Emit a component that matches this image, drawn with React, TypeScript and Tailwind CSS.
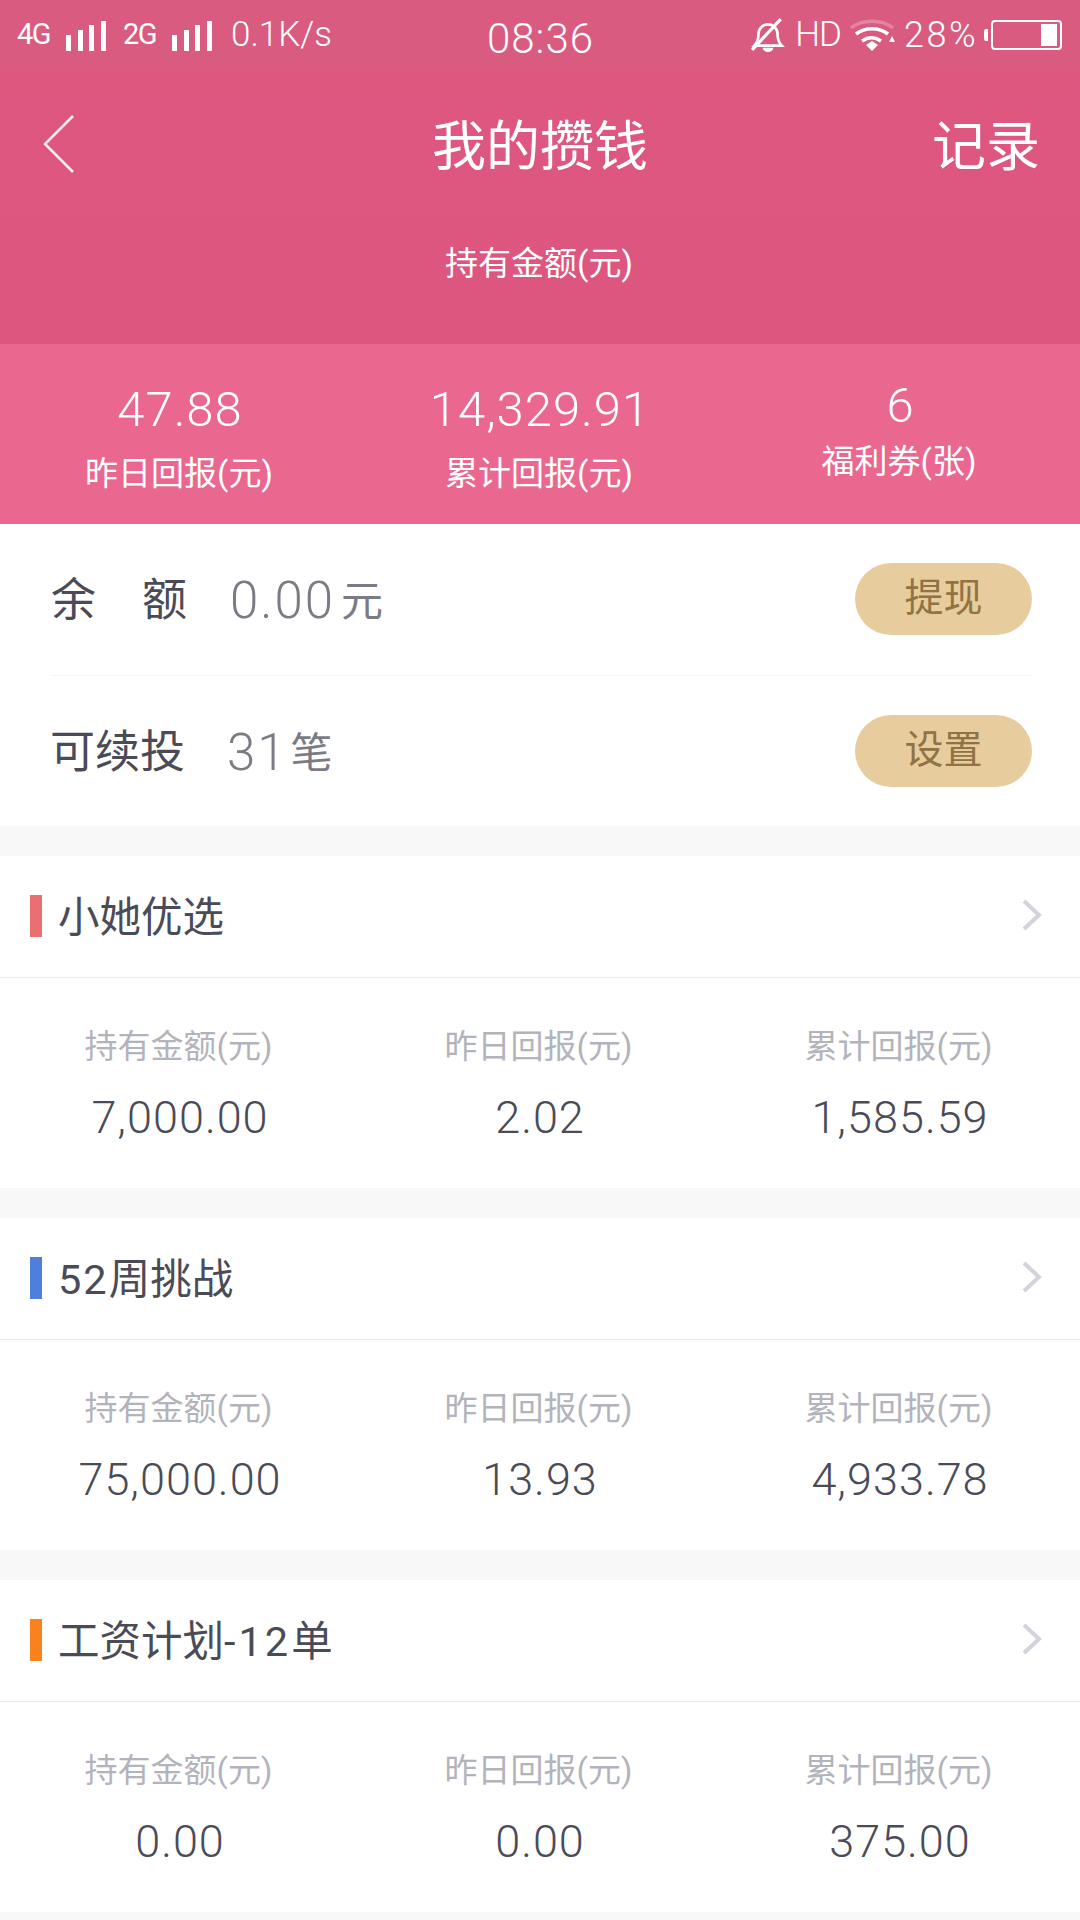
const font = '[font-family:Roboto,"Noto_Sans_CJK_SC",sans-serif]'

function Bars() {
    return (
        <svg width="42" height="30" viewBox="0 0 42 30" fill="white">
            <rect x="0" y="14" width="5" height="16" />
            <rect x="12" y="9" width="5" height="21" />
            <rect x="23" y="4" width="5" height="26" />
            <rect x="35" y="0" width="5" height="30" />
        </svg>
    )
}

function StatusBar() {
    return (
        <div className="h-[70px] bg-[#d95b80] flex items-center justify-between text-white relative pl-[17px] pr-[18px]">
            <div className="flex items-center">
                <span className="text-[29px] w-[36px] tracking-[-1.5px]">4G</span>
                <span className="ml-[13px] mt-[2px]"><Bars /></span>
                <span className="text-[29px] ml-[15px] w-[36px] tracking-[-1.5px]">2G</span>
                <span className="ml-[13px] mt-[2px]"><Bars /></span>
                <span className="text-[35px] ml-[17px] font-light">0.1K/s</span>
            </div>
            <div className="absolute left-[487px] top-[15px] text-[42px] leading-[48px] font-light tracking-[1px]">08:36</div>
            <div className="flex items-center">
                <svg width="36" height="36" viewBox="0 0 34 34" fill="none" stroke="white" strokeWidth="2.5">
                    <path d="M4 27c3-3 4-6 4-11 0-5 4-9 9-9s9 4 9 9c0 5 1 8 4 11z" />
                    <path d="M2 31L29 2" strokeWidth="3" />
                    <path d="M12 29a5 4 0 0 0 10 0z" fill="white" stroke="none" />
                </svg>
                <span className="text-[35px] ml-[9px] font-light tracking-[-1px]">HD</span>
                <svg className="ml-[8px]" width="46" height="34" viewBox="0 0 46 34" fill="none" stroke="white" strokeWidth="3.5">
                    <path d="M2 10c11-9 31-9 42 0" strokeOpacity="0.25" />
                    <path d="M7 16c9-7 23-7 32 0" />
                    <path d="M13 23c6-4 13-4 19 0" />
                    <path d="M17 27l6-4 6 4-6 6z" fill="white" stroke="none" />
                    <path d="M40 24l3-6 3 6z" fill="white" stroke="none" />
                </svg>
                <span className="text-[36px] ml-[9px] tracking-[2.5px] font-light">28%</span>
                <span className="ml-[6px] w-[4px] h-[12px] bg-white rounded-l-[2px]" />
                <span className="ml-[3px] w-[71px] h-[30px] border-2 border-white rounded-[4px] flex justify-end items-center pr-[3px]">
                    <span className="w-[16px] h-[22px] bg-white" />
                </span>
            </div>
        </div>
    )
}

function TopStat({ value, label, small }: { value: string; label: string; small?: boolean }) {
    return (
        <div className="flex-1 flex flex-col items-center">
            <div className={small ? "text-[49px] leading-[56px] font-light -mt-[2px]" : "text-[49px] leading-[56px] font-light tracking-[1px] mt-[2px]"}>{value}</div>
            <div className={small ? "text-[33px] leading-[44px] mt-[6px] pr-[2px]" : "text-[33px] leading-[44px] mt-[14px] pr-[2px]"}>{label}</div>
        </div>
    )
}

function Row({ label, value, unit, unitGap, btn, gap }: { label: React.ReactNode; value: string; unit: string; unitGap: string; btn: string; gap: string }) {
    return (
        <div className="flex items-center h-[151px]">
            <div className="text-[45px] text-[#4b4b57] mt-[3px]">{label}</div>
            <div className={`flex items-center mt-[4px] ${gap}`}>
                <span className="text-[51px] text-[#7b7b86] font-light tracking-[2px]">{value}</span>
                <span className={`text-[42px] text-[#7b7b86] ${unitGap}`}>{unit}</span>
            </div>
            <div className="ml-auto mb-[2px] w-[177px] h-[72px] rounded-full bg-[#e7cc9d] flex items-center justify-center text-[39px] text-[#8f7343]">{btn}</div>
        </div>
    )
}

function Cell({ label, value }: { label: string; value: string }) {
    return (
        <div className="flex-1 flex flex-col items-center">
            <div className="text-[33px] leading-[44px] text-[#b3b3bc] pr-[3px]">{label}</div>
            <div className="text-[45px] leading-[52px] text-[#4b4b57] mt-[23px] font-light tracking-[1px]">{value}</div>
        </div>
    )
}

function Product({ color, name, values }: { color: string; name: React.ReactNode; values: string[] }) {
    return (
        <div className="bg-white">
            <div className="h-[122px] flex items-center pl-[30px] pr-[38px] border-b border-[#e9e9ee]">
                <span className={`w-[12px] h-[42px] -mt-[2px] ${color}`} />
                <span className="text-[41.5px] text-[#4b4b57] ml-[16px] mt-[3px]">{name}</span>
                <svg className="ml-auto -mt-[4px]" width="20" height="32" viewBox="0 0 20 32" fill="none" stroke="#d3d3dc" strokeWidth="4">
                    <path d="M2 2l15 14L2 30" />
                </svg>
            </div>
            <div className="h-[210px] pt-[47px] flex">
                <Cell label="持有金额(元)" value={values[0]} />
                <Cell label="昨日回报(元)" value={values[1]} />
                <Cell label="累计回报(元)" value={values[2]} />
            </div>
        </div>
    )
}

export default function App() {
    return (
        <div className={`w-[1080px] h-[1920px] overflow-hidden bg-[#f8f8f8] ${font}`}>
            <StatusBar />
            <div className="h-[274px] bg-gradient-to-b from-[#de577f] to-[#dc5680] text-white pt-[36px]">
                <div className="h-[76px] flex items-center justify-between pl-[42px] pr-[40px] relative">
                    <svg width="34" height="60" viewBox="0 0 34 60" fill="none" stroke="white" strokeWidth="2.5" strokeOpacity="0.9">
                        <path d="M31 2L3 30l28 28" />
                    </svg>
                    <div className="absolute left-0 right-0 text-center text-[54px] leading-[76px] top-[4px]">我的攒钱</div>
                    <div className="text-[54px] leading-[76px] mt-[8px]">记录</div>
                </div>
                <div className="text-center text-[33px] leading-[44px] mt-[60px] pr-[2px]">持有金额(元)</div>
            </div>
            <div className="h-[180px] bg-[#ea6890] text-white flex pt-[36px]">
                <TopStat value="47.88" label="昨日回报(元)" />
                <TopStat value="14,329.91" label="累计回报(元)" />
                <TopStat value="6" label="福利券(张)" small />
            </div>
            <div className="bg-white pl-[50px] pr-[48px] h-[302px]">
                <div className="border-b border-[#f5f5f5]">
                    <Row label={<span className="flex w-[136px] justify-between ml-[1px]"><span>余</span><span>额</span></span>} value="0.00" unit="元" unitGap="ml-[6px]" btn="提现" gap="ml-[43px]" />
                </div>
                <Row label="可续投" value="31" unit="笔" unitGap="ml-[3px]" btn="设置" gap="ml-[42px]" />
            </div>
            <div className="mt-[30px]">
                <Product color="bg-[#ea6f70]" name="小她优选" values={["7,000.00", "2.02", "1,585.59"]} />
            </div>
            <div className="mt-[30px]">
                <Product color="bg-[#4f7fdc]" name={<><span className="tracking-[2px]">52</span>周挑战</>} values={["75,000.00", "13.93", "4,933.78"]} />
            </div>
            <div className="mt-[30px]">
                <Product color="bg-[#f9821f]" name={<>工资计划<span className="tracking-[3px]">-12</span>单</>} values={["0.00", "0.00", "375.00"]} />
            </div>
        </div>
    )
}
